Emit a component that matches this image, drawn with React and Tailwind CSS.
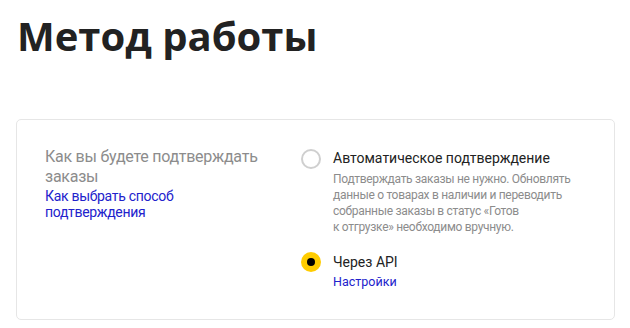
export default function App() {
  return (
    <div className="w-[630px] h-[328px] bg-white overflow-hidden" style={{ fontFamily: 'Roboto, "Noto Sans", sans-serif' }}>
      <h1 className="pl-[17px] pt-[8px] text-[40px] leading-[56px] font-bold text-[#222]" style={{ fontFamily: '"Open Sans", sans-serif' }}>Метод работы</h1>
      <div className="mt-[55px] ml-[16px] w-[599px] h-[201px] border border-[#e6e6e6] rounded-[5px] flex pl-[28px] pt-[27px]">
        <div className="w-[256px]">
          <div className="text-[16px] leading-[20px] text-[#8c8c8c] tracking-[-0.25px]">Как вы будете подтверждать заказы</div>
          <div className="text-[14px] leading-[16px] text-[#2222cc] mt-[1px] w-[170px] tracking-[-0.3px]">Как выбрать способ подтверждения</div>
        </div>
        <div className="flex flex-col">
          <div className="flex">
            <div className="w-[20px] h-[20px] rounded-full border-2 border-[#cfcfcf] mt-[2px] shrink-0"></div>
            <div className="ml-[12px]">
              <div className="text-[14px] leading-[22px] text-[#222]">Автоматическое подтверждение</div>
              <div className="text-[12px] leading-[16px] text-[#8c8c8c] mt-[2px] whitespace-nowrap tracking-[-0.3px]">Подтверждать заказы не нужно. Обновлять<br />данные о товарах в наличии и переводить<br />собранные заказы в статус «Готов<br />к отгрузке» необходимо вручную.</div>
            </div>
          </div>
          <div className="flex mt-[16px]">
            <div className="w-[20px] h-[20px] rounded-full bg-[#fc0] flex items-center justify-center mt-[1px] shrink-0">
              <div className="w-[8px] h-[8px] rounded-full bg-black"></div>
            </div>
            <div className="ml-[12px]">
              <div className="text-[14px] leading-[22px] text-[#222]">Через API</div>
              <div className="text-[12.5px] leading-[18px] text-[#2222cc]">Настройки</div>
            </div>
          </div>
        </div>
      </div>
    </div>
  );
}
